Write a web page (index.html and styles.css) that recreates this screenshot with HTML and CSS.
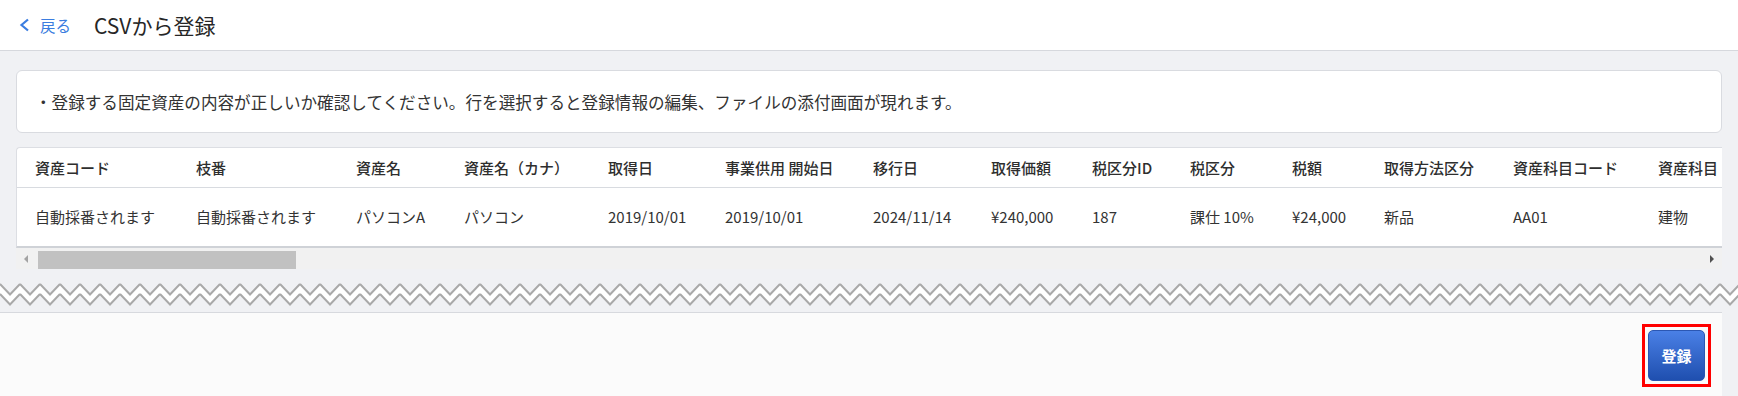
FILE: index.html
```html
<!DOCTYPE html>
<html lang="ja">
<head>
    <meta charset="UTF-8">
    <meta name="viewport" content="width=device-width, initial-scale=1.0">
    <title>CSVから登録</title>

    <link rel="stylesheet" href="styles.css">
</head>
<body>
    <header class="topbar">
        <a class="back" href="#">
            <svg class="back-icon" width="11" height="14" viewBox="0 0 11 14">
                <path d="M9 1.5 L2.5 7 L9 12.5" fill="none" stroke="#3b7de0" stroke-width="2.2"/>
            </svg>
            <span>戻る</span>
        </a>
        <h1 class="title">CSVから登録</h1>
    </header>

    <main class="content">
        <div class="notice">・登録する固定資産の内容が正しいか確認してください。行を選択すると登録情報の編集、ファイルの添付画面が現れます。</div>

        <div class="table-box">
            <table class="grid">
                <colgroup>
                    <col><col><col><col><col><col><col><col><col><col><col><col><col><col>
                </colgroup>
                <thead>
                    <tr>
                        <th>資産コード</th>
                        <th>枝番</th>
                        <th>資産名</th>
                        <th>資産名（カナ）</th>
                        <th>取得日</th>
                        <th>事業供用 開始日</th>
                        <th>移行日</th>
                        <th>取得価額</th>
                        <th>税区分ID</th>
                        <th>税区分</th>
                        <th>税額</th>
                        <th>取得方法区分</th>
                        <th>資産科目コード</th>
                        <th>資産科目</th>
                    </tr>
                </thead>
                <tbody>
                    <tr>
                        <td>自動採番されます</td>
                        <td>自動採番されます</td>
                        <td>パソコンA</td>
                        <td>パソコン</td>
                        <td>2019/10/01</td>
                        <td>2019/10/01</td>
                        <td>2024/11/14</td>
                        <td>¥240,000</td>
                        <td>187</td>
                        <td>課仕 10%</td>
                        <td>¥24,000</td>
                        <td>新品</td>
                        <td>AA01</td>
                        <td>建物</td>
                    </tr>
                </tbody>
            </table>
        </div>

        <div class="scrollbar">
            <div class="scroll-btn"><span class="arrow arrow-left"></span></div>
            <div class="scroll-track"><div class="scroll-thumb"></div></div>
            <div class="scroll-btn"><span class="arrow arrow-right"></span></div>
        </div>
    </main>

    <div class="tear">
        <svg width="100%" height="24">
            <defs>
                <pattern id="zigzag" width="20" height="24" patternUnits="userSpaceOnUse">
                    <path d="M0 2 L10 12.5 L20 2 L20 12 L10 22.5 L0 12 Z" fill="#ffffff"/>
                    <path d="M0 2 L10 12.5 L20 2" fill="none" stroke="#a9a9a9" stroke-width="2"/>
                    <path d="M0 12 L10 22.5 L20 12" fill="none" stroke="#a9a9a9" stroke-width="2"/>
                </pattern>
            </defs>
            <rect width="100%" height="24" fill="url(#zigzag)"/>
        </svg>
    </div>

    <footer class="footer">
        <div class="highlight">
            <button class="submit">登録</button>
        </div>
    </footer>
</body>
</html>
```

FILE: styles.css
```css
* {
    box-sizing: border-box;
}

body {
    margin: 0;
    background-color: #f0f1f4;
    font-family: "Noto Sans CJK JP", "Noto Sans", sans-serif;
    color: #333;
}

.topbar {
    display: flex;
    align-items: center;
    height: 51px;
    padding-left: 19px;
    background-color: #fff;
    border-bottom: 1px solid #d6d8dd;
}

.back {
    display: flex;
    align-items: center;
    gap: 10px;
    color: #3b7de0;
    font-size: 15.5px;
    text-decoration: none;
}

.title {
    margin: 0 0 0 23px;
    font-size: 21px;
    font-weight: 400;
    color: #262626;
}

.content {
    padding: 19px 16px 0;
}

.notice {
    display: flex;
    align-items: center;
    height: 63px;
    padding-left: 18px;
    background-color: #fff;
    border: 1px solid #d9dbe0;
    border-radius: 6px;
    font-size: 16.6px;
    white-space: nowrap;
}

.table-box {
    margin-top: 14px;
    overflow: hidden;
    background-color: #fff;
    border: 1px solid #dcdee3;
    border-right: none;
    border-bottom: 2px solid #cfd2d7;
    border-top-left-radius: 4px;
}

.grid {
    width: 1763px;
    table-layout: fixed;
    border-collapse: collapse;
    font-size: 15px;
    white-space: nowrap;
}

.grid th,
.grid td {
    padding: 0 0 0 18px;
    text-align: left;
    overflow: hidden;
}

.grid th {
    height: 39px;
    font-weight: 500;
    color: #2e2e2e;
    border-bottom: 1px solid #d8dbe0;
}

.grid td {
    height: 59px;
    color: #333;
}

.grid col:nth-child(1) { width: 161px; }
.grid col:nth-child(2) { width: 160px; }
.grid col:nth-child(3) { width: 108px; }
.grid col:nth-child(4) { width: 144px; }
.grid col:nth-child(5) { width: 117px; }
.grid col:nth-child(6) { width: 148px; }
.grid col:nth-child(7) { width: 118px; }
.grid col:nth-child(8) { width: 101px; }
.grid col:nth-child(9) { width: 98px; }
.grid col:nth-child(10) { width: 102px; }
.grid col:nth-child(11) { width: 92px; }
.grid col:nth-child(12) { width: 129px; }
.grid col:nth-child(13) { width: 145px; }
.grid col:nth-child(14) { width: 140px; }

.scrollbar {
    display: flex;
    height: 21px;
    background-color: #f1f1f1;
}

.scroll-btn {
    display: flex;
    align-items: center;
    justify-content: center;
    width: 20px;
}

.arrow {
    width: 0;
    height: 0;
    border-top: 4px solid transparent;
    border-bottom: 4px solid transparent;
}

.arrow-left {
    border-right: 4px solid #a3a3a3;
}

.arrow-right {
    border-left: 4px solid #505050;
}

.scroll-track {
    flex: 1;
    padding: 3px 2px 0;
}

.scroll-thumb {
    width: 258px;
    height: 18px;
    background-color: #c1c1c1;
}

.tear {
    height: 24px;
    margin-top: 13px;
}

.tear svg {
    display: block;
}

.footer {
    display: flex;
    justify-content: flex-end;
    align-items: flex-start;
    height: 90px;
    margin: 6px 16px 0 0;
    padding: 11px 11px 0 0;
    background-color: #fbfbfb;
    border-top: 1px solid #d7d9de;
}

.highlight {
    padding: 3px;
    border: 3px solid #ff0000;
}

.submit {
    display: block;
    width: 57px;
    height: 51px;
    border: 1px solid #2b57b3;
    border-radius: 5px;
    background: linear-gradient(#4a80e6, #1f4faf);
    color: #fff;
    font-family: inherit;
    font-size: 15px;
    font-weight: 700;
}
```
